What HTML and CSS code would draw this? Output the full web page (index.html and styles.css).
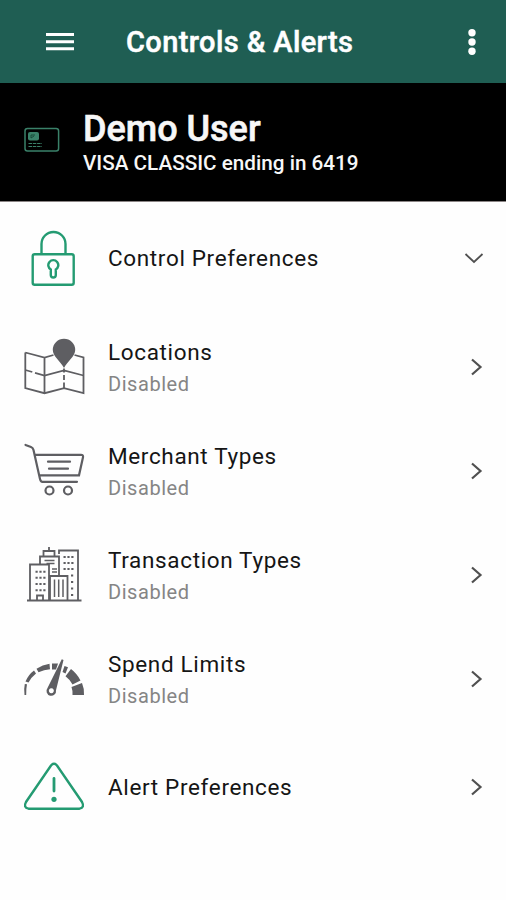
FILE: index.html
```html
<!DOCTYPE html>
<html lang="en">
<head>
<meta charset="utf-8">
<title>Controls &amp; Alerts</title>
<link rel="stylesheet" href="styles.css">
</head>
<body>
<header class="bar">
  <svg class="menu" width="28" height="20" viewBox="0 0 28 20"><path d="M0 2.4h28M0 9.8h28M0 16.7h28" stroke="#fff" stroke-width="3"/></svg>
  <h1 class="bar-title">Controls &amp; Alerts</h1>
  <svg class="more" width="10" height="28" viewBox="0 0 10 28" fill="#fff"><circle cx="5" cy="4.7" r="3.7"/><circle cx="5" cy="14" r="3.7"/><circle cx="5" cy="23.3" r="3.7"/></svg>
</header>
<section class="account">
  <svg class="card" width="36" height="26" viewBox="0 0 36 26"><rect x="1" y="1.4" width="33.6" height="22.6" rx="2.5" fill="none" stroke="#3a8169" stroke-width="1.5"/><rect x="4" y="5" width="11" height="8.5" rx="2" fill="#3a8169"/><path d="M7 11V8h4M7 11l3-2" fill="none" stroke="#174a39"/><path d="M4.500 16.500h13.500M4.500 19.500h13.500" stroke="#3a8169" stroke-width="1.200" stroke-dasharray="3.500 .8"/></svg>
  <div>
    <h2 class="name">Demo User</h2>
    <p class="number">VISA CLASSIC ending in 6419</p>
  </div>
</section>
<main>
  <div class="row row-control">
    <svg class="icon green" viewBox="0 -1 90 80"><rect x="22.700" y="34.200" width="41" height="30.500" rx="2"/><path d="M31.500 34V24a12 12 0 0 1 24 0v10M40.800 49.500a5 5 0 1 1 5 0V55a2.500 2.500 0 0 1-5 0z"/></svg>
    <div class="text"><div class="label">Control Preferences</div></div>
    <svg class="chevron down" viewBox="0 0 24 24"><path d="M3.500 8l8.500 8 8.500-8"/></svg>
  </div>
  <div class="row">
    <svg class="icon gray" viewBox="0 2.500 90 80"><path d="M15.300 27v35.500l19.200 5.200 19.500-5 19.500 5V32l-9-2.500M15.300 27l19.200 5 9-2.500M34.500 32v35.700" stroke-width="1.800"/><path d="M15.300 44.500l7 2M25 47.300l9.500 2.700L54 45l19.500 5M54 43v4M54 49.500v5M54 57v5.500" stroke-width="1.800"/><path d="M54 42.500C50.500 35.500 42.800 31 42.800 24.500a11.200 11.200 0 0 1 22.400 0C65.200 31 57.500 35.500 54 42.500z" fill="#5e5e62" stroke="none"/></svg>
    <div class="text"><div class="label">Locations</div><div class="status">Disabled</div></div>
    <svg class="chevron" viewBox="0 0 24 24"><path d="M8 4.500l8.500 7.500L8 19.500"/></svg>
  </div>
  <div class="row">
    <svg class="icon gray" viewBox="0 2 90 80"><path d="M15.500 15l5.500 2q2 .7 2.500 3L30 49q.6 2.800 2.500 2.800H67M25 24.800h46q2.500 0 2 2.500l-4 18H29.500" stroke-width="2.200" stroke-linecap="round"/><path d="M38 31.700h22M39 38.700h19" stroke-width="2.200" stroke-linecap="round"/><circle cx="39.500" cy="60.500" r="4"/><circle cx="58" cy="60.500" r="4"/></svg>
    <div class="text"><div class="label">Merchant Types</div><div class="status">Disabled</div></div>
    <svg class="chevron" viewBox="0 0 24 24"><path d="M8 4.500l8.500 7.500L8 19.500"/></svg>
  </div>
  <div class="row">
    <svg class="icon gray" viewBox="0 1 90 80"><g stroke-width="1.800"><path d="M20 65V29.500h19V65M30 29V21.500h19V41M33.500 21v-5h11v5M39 16v-4M49 19v-3.500h19V65"/><path d="M40 65V41h17.500v24"/><path d="M44.500 44.500V62M48.700 44.500V62M53 44.500V62M34.500 25.500h10M36.500 28.500h8M42 34h5M42 37h5" stroke-width="1.500"/><path d="M17 65.500h54.500" stroke-width="2"/><path d="M25.500 36.700h10M25.500 42.700h10M25.500 49h10M25.500 55.200h10M53.500 22h10M53.500 28h10M53.500 34h10M61 40.500h2.500M61 47h2.500M61 53.500h2.500M61 60h2.500" stroke-width="2" stroke-dasharray="2.200 1.700"/><path d="M27 65v-4.500h6V65"/></g></svg>
    <div class="text"><div class="label">Transaction Types</div><div class="status">Disabled</div></div>
    <svg class="chevron" viewBox="0 0 24 24"><path d="M8 4.500l8.500 7.500L8 19.500"/></svg>
  </div>
  <div class="row">
    <svg class="icon" viewBox="0 0 90 80"><path fill="#5e5e62" d="M14.500 55q-.8-6 .3-11l2.200.3q-1 5-.8 10.700zM15.500 41.500q3-7 8.500-11l2 3q-5 4-7.500 9zM26.500 28.700q6-4 13-5l.5 5.500q-6 .6-11.500 3zM42 23.500h6l-2 6h-4zM54.500 26l3.500 1.300-2.500 6.200-3-1.500zM61 29q6 4.500 9.500 11.500l-8 4q-2.500-5-7-8.300zM72 43q2.500 6 2 12H62.500q.3-4.500-1-8z"/><path d="M51.800 19.200l1.700.7-7.500 30.300a4.800 4.800 0 1 1-8.500-2.200zM41.300 48.300a2.500 2.500 0 1 0 .1 0z" fill="#5e5e62" fill-rule="evenodd"/></svg>
    <div class="text"><div class="label">Spend Limits</div><div class="status">Disabled</div></div>
    <svg class="chevron" viewBox="0 0 24 24"><path d="M8 4.500l8.500 7.500L8 19.500"/></svg>
  </div>
  <div class="row row-alert">
    <svg class="icon green" viewBox="0 -2 90 80"><path d="M41 15.500q3-3.500 6 0l25 36.500q3 5.500-2.500 6.700h-51q-5.500-1.200-2.500-6.700z"/><path d="M44 28.500v12.500" stroke-width="2.800" stroke-linecap="round"/><circle cx="44" cy="49.300" r="2.600" fill="#249b72" stroke="none"/></svg>
    <div class="text"><div class="label">Alert Preferences</div></div>
    <svg class="chevron" viewBox="0 0 24 24"><path d="M8 4.500l8.500 7.500L8 19.500"/></svg>
  </div>
</main>
</body>
</html>
```
FILE: styles.css
```css
* { box-sizing: border-box; }
body { margin: 0; min-height: 900px; background: #fefefe; color: #151515; font-family: Roboto, "Liberation Sans", sans-serif; }
h1, h2, p { margin: 0; }
.bar { display: flex; align-items: center; height: 83px; padding: 0 29px 0 46px; background: #1f5e53; color: #fff; }
.menu { flex: none; }
.bar-title { flex: 1; margin-left: 52px; font-size: 29px; line-height: 34px; font-weight: 500; letter-spacing: .4px; -webkit-text-stroke: .5px #fff; white-space: nowrap; }
.account { display: flex; align-items: flex-start; height: 119px; padding: 26px 0 0 24px; background: #000; color: #f7f7f7; border-bottom: 1px solid #8b8585; }
.card { flex: none; margin: 18px 23px 0 0; }
.name { font-size: 36px; line-height: 40px; font-weight: 500; -webkit-text-stroke: .6px #f7f7f7; white-space: nowrap; }
.number { font-size: 20.700px; line-height: 29px; font-weight: 500; white-space: nowrap; }
.row { display: flex; align-items: center; height: 104px; padding: 0 18px 0 10px; }
.row-control { height: 114px; }
.row-alert { height: 112px; }
.icon { flex: none; width: 90px; height: 80px; fill: none; }
.green { stroke: #249b72; stroke-width: 2.400; }
.gray { stroke: #5e5e62; stroke-width: 2.200; }
.text { flex: 1; margin-left: 8px; white-space: nowrap; }
.label { padding-bottom: 2px; font-size: 22.500px; line-height: 30px; letter-spacing: .65px; }
.status { font-size: 20px; line-height: 30px; letter-spacing: .55px; color: #858585; }
.chevron { flex: none; width: 24px; height: 24px; margin-bottom: 2px; fill: none; stroke: #505050; stroke-width: 2.200; }
.down { margin-right: 2px; stroke-width: 1.800; }
```
